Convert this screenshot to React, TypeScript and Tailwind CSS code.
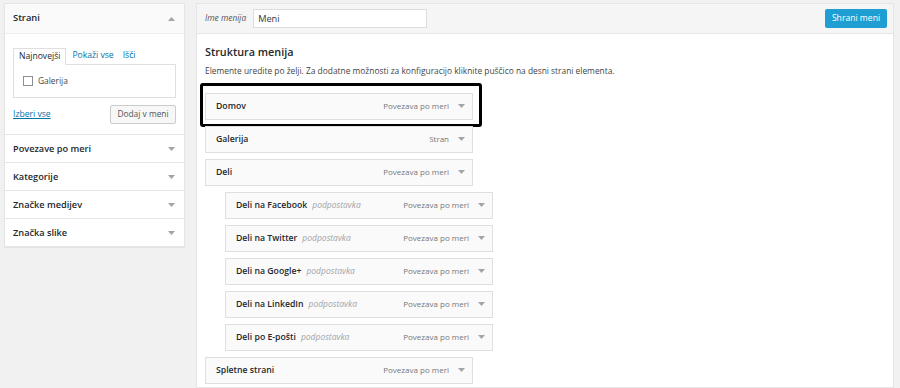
const font = { fontFamily: "'Open Sans', 'Liberation Sans', sans-serif" };

type Item = { title: string; type: string; sub?: boolean; highlight?: boolean };

const items: Item[] = [
  { title: "Domov", type: "Povezava po meri", highlight: true },
  { title: "Galerija", type: "Stran" },
  { title: "Deli", type: "Povezava po meri" },
  { title: "Deli na Facebook", type: "Povezava po meri", sub: true },
  { title: "Deli na Twitter", type: "Povezava po meri", sub: true },
  { title: "Deli na Google+", type: "Povezava po meri", sub: true },
  { title: "Deli na LinkedIn", type: "Povezava po meri", sub: true },
  { title: "Deli po E-pošti", type: "Povezava po meri", sub: true },
  { title: "Spletne strani", type: "Povezava po meri" },
];

const sections = ["Povezave po meri", "Kategorije", "Značke medijev", "Značka slike"];

function Caret({ up }: { up?: boolean }) {
  return (
    <svg width="7" height="4" viewBox="0 0 7 4" className="block">
      <path d={up ? "M0 4 L3.5 0 L7 4 Z" : "M0 0 L7 0 L3.5 4 Z"} fill="#a0a5aa" />
    </svg>
  );
}

function MenuItem({ item }: { item: Item }) {
  return (
    <div className={item.sub ? "relative ml-[20px] w-fit" : "relative w-fit"}>
      {item.highlight && (
        <div className="absolute -left-[5px] -top-[10px] -right-[9px] -bottom-[7px] rounded-[3px] border-[3px] border-black" />
      )}
      <div className="flex h-[27px] w-[268px] items-center border border-[#dfdfdf] bg-[#fafafa] pl-[10px] pr-[7px]">
        <span className="text-[8.7px] font-semibold text-[#23282d]">{item.title}</span>
        {item.sub && <span className="ml-[5px] text-[8.5px] italic text-[#a0a5aa]">podpostavka</span>}
        <span className="ml-auto text-[8px] text-[#777]">{item.type}</span>
        <span className="ml-[9px]"><Caret /></span>
      </div>
    </div>
  );
}

export default function App() {
  return (
    <div style={font} className="flex h-[388px] w-[900px] items-start gap-[11px] overflow-hidden bg-[#f1f1f1] pl-[4px] pt-[3px]">
      {/* left column */}
      <div className="w-[181px] border border-[#e5e5e5] bg-white shadow-[0_1px_1px_rgba(0,0,0,0.05)]">
        <div className="flex h-[30px] items-center justify-between border-b border-[#eee] bg-[#fafafa] pl-[8px] pr-[9px]">
          <span className="text-[9.4px] font-semibold text-[#23282d]">Strani</span>
          <Caret up />
        </div>
        <div className="px-[8px] pt-[14px] pb-[10px]">
          <div className="flex h-[16px] items-end text-[8.6px]">
            <div className="-mb-px flex h-[17px] items-center border border-b-white border-[#dfdfdf] bg-white px-[5px] text-[#23282d]">Najnovejši</div>
            <span className="ml-[6px] pb-[2px] text-[#0073aa]">Pokaži vse</span>
            <span className="ml-[9px] pb-[2px] text-[#0073aa]">Išči</span>
          </div>
          <div className="flex h-[34px] items-center border border-[#dfdfdf] bg-white pl-[9px]">
            <span className="h-[10px] w-[10px] border border-[#8c8f94]" />
            <span className="ml-[5px] text-[8.4px] text-[#444]">Galerija</span>
          </div>
          <div className="mt-[7px] flex items-center justify-between">
            <span className="text-[8.6px] text-[#0073aa] underline">Izberi vse</span>
            <span className="flex h-[19px] w-[66px] items-center justify-center rounded-[2px] border border-[#ccc] bg-[#f7f7f7] text-[8.4px] text-[#555]">Dodaj v meni</span>
          </div>
        </div>
        {sections.map((s) => (
          <div key={s} className="flex h-[28px] items-center justify-between border-t border-[#e5e5e5] pl-[8px] pr-[9px]">
            <span className="text-[9.2px] font-semibold text-[#23282d]">{s}</span>
            <Caret />
          </div>
        ))}
      </div>

      {/* right column */}
      <div className="flex w-[698px] flex-col self-stretch border border-[#e5e5e5] bg-white">
        <div className="flex h-[30px] items-center border-b border-[#e5e5e5] bg-[#f5f5f5] pl-[8px] pr-[6px]">
          <span className="text-[8.4px] italic text-[#555]">Ime menija</span>
          <div className="ml-[7px] flex h-[19px] w-[174px] items-center border border-[#ddd] bg-white pl-[4px] text-[9.2px] text-[#32373c]">Meni</div>
          <span className="ml-auto flex h-[19px] w-[62px] items-center justify-center rounded-[2px] bg-[#1f9ed4] text-[8.6px] text-white">Shrani meni</span>
        </div>
        <div className="pl-[8px] pt-[10px]">
          <div className="text-[10.8px] font-semibold text-[#23282d]">Struktura menija</div>
          <div className="mt-[5px] text-[8.4px] text-[#444]">
            Elemente uredite po želji. Za dodatne možnosti za konfiguracijo kliknite puščico na desni strani elementa.
          </div>
          <div className="mt-[15px] flex flex-col items-start gap-[6px]">
            {items.map((it) => (
              <MenuItem key={it.title} item={it} />
            ))}
          </div>
        </div>
      </div>
    </div>
  );
}
